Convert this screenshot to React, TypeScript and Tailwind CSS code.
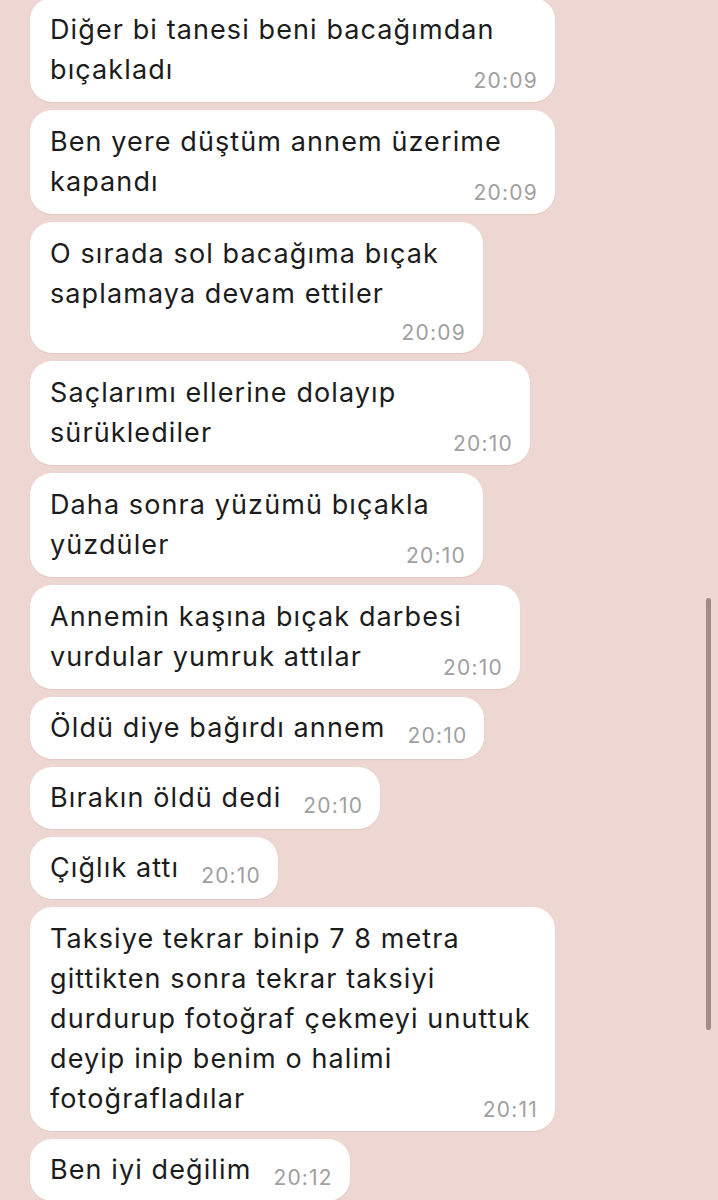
import React from 'react';

type Msg = {
  lines: string[];
  time: string;
  width?: number; // bubble width in px for multi-line bubbles
  timeOwnLine?: boolean;
};

const messages: Msg[] = [
  { lines: ['Diğer bi tanesi beni bacağımdan', 'bıçakladı'], time: '20:09', width: 525 },
  { lines: ['Ben yere düştüm annem üzerime', 'kapandı'], time: '20:09', width: 525 },
  { lines: ['O sırada sol bacağıma bıçak', 'saplamaya devam ettiler'], time: '20:09', width: 453, timeOwnLine: true },
  { lines: ['Saçlarımı ellerine dolayıp', 'sürüklediler'], time: '20:10', width: 500 },
  { lines: ['Daha sonra yüzümü bıçakla', 'yüzdüler'], time: '20:10', width: 453 },
  { lines: ['Annemin kaşına bıçak darbesi', 'vurdular yumruk attılar'], time: '20:10', width: 490 },
  { lines: ['Öldü diye bağırdı annem'], time: '20:10' },
  { lines: ['Bırakın öldü dedi'], time: '20:10' },
  { lines: ['Çığlık attı'], time: '20:10' },
  {
    lines: [
      'Taksiye tekrar binip 7 8 metra',
      'gittikten sonra tekrar taksiyi',
      'durdurup fotoğraf çekmeyi unuttuk',
      'deyip inip benim o halimi',
      'fotoğrafladılar',
    ],
    time: '20:11',
    width: 525,
  },
  { lines: ['Ben iyi değilim'], time: '20:12' },
];

const font = { fontFamily: 'Inter, "Liberation Sans", sans-serif' };

const Bubble: React.FC<{ m: Msg }> = ({ m }) => {
  if (m.lines.length === 1) {
    return (
      <div className="self-start flex items-end bg-white rounded-[22px] pl-[20px] pr-[17px] pt-[11px] pb-[11px] shadow-[0_1px_1px_rgba(120,80,70,0.12)]">
        <span className="text-[27px] leading-[40px] tracking-[1.1px] text-[#1c1c1c]">{m.lines[0]}</span>
        <span className="ml-[22px] text-[21px] leading-[24px] tracking-[1.2px] text-[#a0a0a0]">{m.time}</span>
      </div>
    );
  }
  return (
    <div
      className="self-start flex flex-col bg-white rounded-[22px] pl-[20px] pr-[17px] pt-[12px] shadow-[0_1px_1px_rgba(120,80,70,0.12)]"
      style={{ width: m.width }}
    >
      <div className="text-[27px] leading-[40px] tracking-[1.1px] text-[#1c1c1c]">
        {m.lines.map((l, i) => (
          <div key={i} className="whitespace-nowrap">{l}</div>
        ))}
      </div>
      <div
        className={
          m.timeOwnLine
            ? 'flex justify-end mt-[7px] pb-[8px] text-[21px] leading-[24px] tracking-[1.2px] text-[#a0a0a0]'
            : 'flex justify-end -mt-[21px] pb-[9px] text-[21px] leading-[24px] tracking-[1.2px] text-[#a0a0a0]'
        }
      >
        <span>{m.time}</span>
      </div>
    </div>
  );
};

export default function App() {
  return (
    <div className="relative w-[718px] h-[1200px] overflow-hidden bg-[#eed7d2]" style={font}>
      <div className="flex flex-col gap-[8px] pl-[30px] -mt-[2px]">
        {messages.map((m, i) => (
          <Bubble key={i} m={m} />
        ))}
      </div>
      {/* scroll indicator */}
      <div className="absolute left-[706px] top-[598px] w-[5px] h-[432px] rounded-full bg-[#a18c8a]" />
    </div>
  );
}
